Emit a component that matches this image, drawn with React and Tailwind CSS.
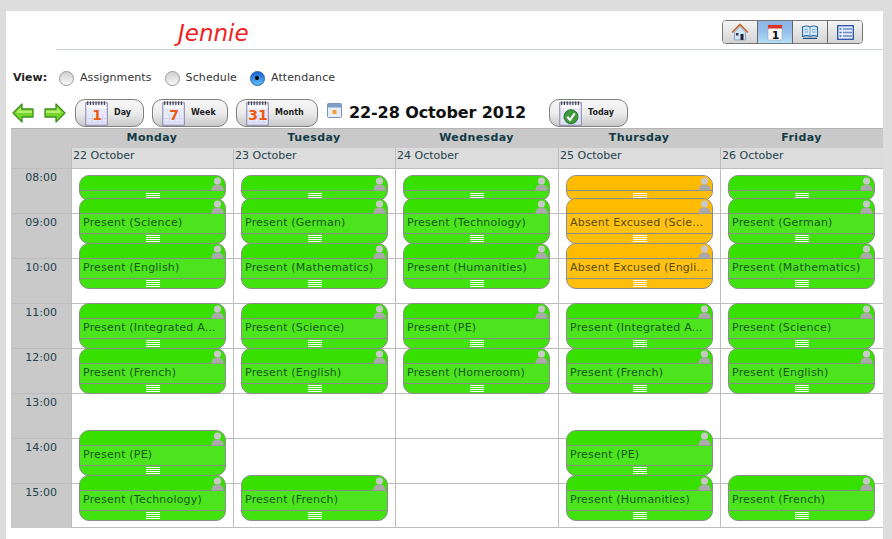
import React from "react";

const GREEN = {
  head: "bg-[#38e000]",
  body: "bg-[#4ce41c]",
  foot: "bg-[#42e210]",
  text: "text-[#17591f]",
};
const ORANGE = {
  head: "bg-[#ffbb00]",
  body: "bg-[#ffc214]",
  foot: "bg-[#ffbe0c]",
  text: "text-[#5a4a10]",
};

// top is the offset from the 08:00 line, in px
const days = [
  {
    name: "Monday",
    date: "22 October",
    events: [
      { top: 7, short: true },
      { top: 30, label: "Present (Science)" },
      { top: 75, label: "Present (English)" },
      { top: 135, label: "Present (Integrated A..." },
      { top: 180, label: "Present (French)" },
      { top: 262, label: "Present (PE)" },
      { top: 307, label: "Present (Technology)" },
    ],
  },
  {
    name: "Tuesday",
    date: "23 October",
    events: [
      { top: 7, short: true },
      { top: 30, label: "Present (German)" },
      { top: 75, label: "Present (Mathematics)" },
      { top: 135, label: "Present (Science)" },
      { top: 180, label: "Present (English)" },
      { top: 307, label: "Present (French)" },
    ],
  },
  {
    name: "Wednesday",
    date: "24 October",
    events: [
      { top: 7, short: true },
      { top: 30, label: "Present (Technology)" },
      { top: 75, label: "Present (Humanities)" },
      { top: 135, label: "Present (PE)" },
      { top: 180, label: "Present (Homeroom)" },
    ],
  },
  {
    name: "Thursday",
    date: "25 October",
    events: [
      { top: 7, short: true, absent: true },
      { top: 30, label: "Absent Excused (Scie...", absent: true },
      { top: 75, label: "Absent Excused (Engli...", absent: true },
      { top: 135, label: "Present (Integrated A..." },
      { top: 180, label: "Present (French)" },
      { top: 262, label: "Present (PE)" },
      { top: 307, label: "Present (Humanities)" },
    ],
  },
  {
    name: "Friday",
    date: "26 October",
    events: [
      { top: 7, short: true },
      { top: 30, label: "Present (German)" },
      { top: 75, label: "Present (Mathematics)" },
      { top: 135, label: "Present (Science)" },
      { top: 180, label: "Present (English)" },
      { top: 307, label: "Present (French)" },
    ],
  },
];

const hours = ["08:00", "09:00", "10:00", "11:00", "12:00", "13:00", "14:00", "15:00"];

function PersonIcon() {
  return (
    <svg width="13" height="14" viewBox="0 0 13 14" className="absolute right-[1px] top-[1px]">
      <circle cx="6.5" cy="4" r="3.6" fill="#c8c8c8" />
      <path d="M0.5 13.5 C0.5 9 3 7.5 6.5 7.5 C10 7.5 12.5 9 12.5 13.5 Z" fill="#aaaaaa" />
    </svg>
  );
}

function Handle({ lines }) {
  return (
    <div className="flex w-[14px] flex-col gap-px">
      {lines.map((l) => (
        <div key={l} className="h-px bg-white" />
      ))}
    </div>
  );
}

function EventCard({ event }) {
  const c = event.absent ? ORANGE : GREEN;
  return (
    <div
      className={`absolute left-[7px] w-[147px] overflow-hidden rounded-[10px] border border-[#8c8c8c] ${
        event.short ? "h-[26px]" : "h-[46px]"
      } ${c.foot}`}
      style={{ top: event.top }}
    >
      <div className={`relative h-[15px] border-b border-[#8c8c8c] ${c.head}`}>
        <PersonIcon />
      </div>
      {!event.short && (
        <div className={`flex h-[20px] items-center border-b border-[#8c8c8c] pl-[3px] text-[11px] tracking-[0.2px] whitespace-nowrap ${c.body} ${c.text}`}>
          {event.label}
        </div>
      )}
      <div className="flex h-[9px] items-center justify-center">
        <Handle lines={event.short ? [1, 2, 3] : [1, 2, 3, 4]} />
      </div>
    </div>
  );
}

function CalendarGlyph({ num, color = "#f05a10", check, size = 30 }) {
  return (
    <svg width={size} height={size} viewBox="0 0 30 30">
      <rect x="3" y="4" width="23" height="24" fill="#e8eafa" stroke="#7c7ca8" strokeWidth="1" />
      <path d="M4 21h21M4 25h21M10 16v12M16 16v12M21 16v12" stroke="#d0d2ee" strokeWidth="1" />
      <path d="M5 2.5v4M8 2.5v4M11 2.5v4M14 2.5v4M17 2.5v4M20 2.5v4M23 2.5v4" stroke="#444" strokeWidth="1.2" />
      <rect x="4" y="7" width="21" height="3" fill="#ffffff" />
      {num && (
        <text x="15" y="22" textAnchor="middle" fontSize="15" fontWeight="700" fontFamily="'DejaVu Sans', sans-serif" fill={color}>
          {num}
        </text>
      )}
      {check && (
        <>
          <circle cx="15" cy="19" r="7.5" fill="#3f9a3a" stroke="#1f6a28" />
          <path d="M11 19l3 3.5 5-7" fill="none" stroke="#fff" strokeWidth="2.2" />
        </>
      )}
    </svg>
  );
}

function ToolButton({ label, widthClass, num, check }) {
  return (
    <div className={`flex h-[28px] items-center rounded-[10px] border border-[#808080] bg-gradient-to-b from-[#f6f6f6] via-[#ececec] to-[#c9c9c9] pl-[8px] ${widthClass}`}>
      <div className="-mt-px -ml-[1px] w-[28px] shrink-0">
        <CalendarGlyph num={num} check={check} size={28} />
      </div>
      <span className="ml-[3px] text-[8px] font-bold text-[#222]">{label}</span>
    </div>
  );
}

function Radio({ label, checked }) {
  return (
    <div className="flex items-center">
      {checked ? (
        <div className="flex h-[15px] w-[15px] items-center justify-center rounded-full border border-[#2a5ea8] bg-gradient-to-b from-[#1c5fd4] to-[#62bdf6]">
          <div className="h-[4px] w-[4px] rounded-full bg-black" />
        </div>
      ) : (
        <div className="h-[15px] w-[15px] rounded-full border border-[#9a9a9a] bg-gradient-to-b from-[#d0d0d0] to-[#f8f8f8]" />
      )}
      <span className="ml-[6px] text-[11px] tracking-[0.1px] text-[#333]">{label}</span>
    </div>
  );
}

function Arrow({ flip }) {
  return (
    <svg width="22" height="20" viewBox="0 0 22 20" className={flip ? "-scale-x-100" : ""}>
      <path d="M1 10 L10 1 V6 H21 V14 H10 V19 Z" fill="#74d62a" stroke="#3c8f1c" strokeWidth="1.3" strokeLinejoin="round" />
      <path d="M4 9.5 L9 4.5 V7.5 H20 V10 H6 Z" fill="#b4ec6c" />
    </svg>
  );
}

function NavTabs() {
  return (
    <div className="flex h-[24px] w-[141px] overflow-hidden rounded-[4px] border border-[#777]">
      <div className="flex flex-1 items-center justify-center border-r border-[#666] bg-gradient-to-b from-[#f5f5f5] to-[#d4d4d4]">
        <svg width="18" height="18" viewBox="0 0 18 18">
          <path d="M3.5 9v8h11V9L9 3.5z" fill="#cfe4f5" stroke="#6a8aa8" strokeWidth="0.7" />
          <path d="M1 9.5L9 1.5l8 8" fill="none" stroke="#c8662a" strokeWidth="1.6" />
          <rect x="9.5" y="11" width="3" height="6" fill="#223" />
          <rect x="5" y="10" width="2.5" height="2.5" fill="#335" />
        </svg>
      </div>
      <div className="flex flex-1 items-center justify-center border-r border-[#666] bg-gradient-to-b from-[#8db4e6] via-[#94c0ec] to-[#b4e0f6]">
        <svg width="18" height="19" viewBox="0 0 18 19">
          <rect x="2" y="2" width="14" height="15" fill="#f7f7f7" stroke="#999" strokeWidth="0.5" />
          <rect x="2" y="2" width="14" height="3.5" fill="#d9342b" />
          <text x="9.5" y="15.5" textAnchor="middle" fontSize="11" fontWeight="700" fontFamily="'DejaVu Sans', sans-serif" fill="#111">1</text>
        </svg>
      </div>
      <div className="flex flex-1 items-center justify-center border-r border-[#666] bg-gradient-to-b from-[#f5f5f5] to-[#d4d4d4]">
        <svg width="18" height="16" viewBox="0 0 18 16">
          <path d="M1.5 3 C4 1.8 7 1.8 9 3 C11 1.8 14 1.8 16.5 3 V12.5 C14 11.5 11 11.5 9 12.5 C7 11.5 4 11.5 1.5 12.5 Z" fill="#d4e9f8" stroke="#2a6aa0" strokeWidth="1.1" />
          <path d="M9 3v9.5M3.5 5.5h3.5M3.5 8h3.5M11 5.5h3.5M11 8h3.5" stroke="#5a8ab8" strokeWidth="0.7" />
          <path d="M2 14.3h14" stroke="#1f4f88" strokeWidth="1.2" />
        </svg>
      </div>
      <div className="flex flex-1 items-center justify-center bg-gradient-to-b from-[#f5f5f5] to-[#d4d4d4]">
        <svg width="17" height="15" viewBox="0 0 17 15">
          <rect x="0.7" y="0.7" width="15.6" height="13.6" fill="#e4eefa" stroke="#2a4fa8" strokeWidth="1.3" />
          <path d="M6 4h9M6 7.5h9M6 11h9" stroke="#6d8ac4" strokeWidth="1.4" />
          <path d="M2.5 4h2M2.5 7.5h2M2.5 11h2" stroke="#3a6ab8" strokeWidth="1.4" />
        </svg>
      </div>
    </div>
  );
}

export default function App() {
  return (
    <div className="h-[539px] overflow-hidden bg-[#dddddd] pt-[11px] pl-[6px] pr-[9px] font-['DejaVu_Sans',sans-serif]">
      <div className="h-[528px] bg-white">
        {/* title bar */}
        <div className="ml-[50px] flex h-[39px] items-start justify-between border-b border-[#c6d2d2] pr-[20px]">
          <div className="mt-[7px] ml-[122px] text-[23px] leading-[30px] italic text-[#ee2222]">Jennie</div>
          <div className="mt-[9px]">
            <NavTabs />
          </div>
        </div>

        {/* view switch */}
        <div className="mt-[20px] flex h-[16px] items-center pl-[7px]">
          <span className="w-[45px] text-[11px] font-bold text-[#222]">View:</span>
          <div className="ml-[1px] flex gap-[13px]">
            <Radio label="Assignments" />
            <Radio label="Schedule" />
            <Radio label="Attendance" checked />
          </div>
        </div>

        {/* toolbar */}
        <div className="mt-[13px] flex h-[28px] items-center pl-[6px]">
          <Arrow />
          <div className="ml-[10px]">
            <Arrow flip />
          </div>
          <div className="ml-[9px] flex gap-[8px]">
            <ToolButton label="Day" num="1" widthClass="w-[69px]" />
            <ToolButton label="Week" num="7" widthClass="w-[76px]" />
            <ToolButton label="Month" num="31" widthClass="w-[82px]" />
          </div>
          <svg width="15" height="15" viewBox="0 0 15 15" className="ml-[9px] -mt-[6px]">
            <rect x="0.5" y="0.5" width="14" height="14" rx="1" fill="#e6ecf8" stroke="#7a94b8" />
            <rect x="1" y="1" width="13" height="3.5" fill="#7f9fc8" />
            <rect x="5.5" y="7" width="4" height="4" fill="#f0a030" />
          </svg>
          <div className="ml-[7px] w-[200px] text-[16px] font-bold tracking-[-0.1px] whitespace-nowrap text-[#111]">22-28 October 2012</div>
          <ToolButton label="Today" check widthClass="w-[79px]" />
        </div>

        {/* calendar */}
        <div className="mt-[1px] ml-[5px] flex border-t border-[#b4b4b4]">
          <div className="w-[60px] shrink-0 bg-[#c9c9c9]">
            <div className="h-[39px]" />
            {hours.map((h) => (
              <div key={h} className="h-[45px] border-t border-[#bdbdbd] pt-[2px] pr-[14px] text-right text-[11px] leading-[13px] text-[#23424c]">
                {h}
              </div>
            ))}
          </div>
          <div className="grid flex-1 grid-cols-[162px_162px_163px_162px_163px]">
            {days.map((day) => (
              <div key={day.name} className="min-w-0">
                <div className="h-[19px] bg-[#c9c9c9] text-center text-[11px] leading-[17px] font-bold tracking-[0.4px] text-[#123a44]">{day.name}</div>
                <div className="h-[20px] border-l border-[#bdbdbd] bg-[#dcdcdc] pl-px text-[11px] leading-[16px] text-[#23424c]">{day.date}</div>
                <div className="relative border-l border-[#bdbdbd]">
                  {hours.map((h, i) => (
                    <div key={h} className={`h-[45px] border-t border-[#bdbdbd] ${i === 7 ? "border-b" : ""}`} />
                  ))}
                  {day.events.map((ev) => (
                    <EventCard key={ev.top} event={ev} />
                  ))}
                </div>
              </div>
            ))}
          </div>
        </div>
      </div>
    </div>
  );
}
